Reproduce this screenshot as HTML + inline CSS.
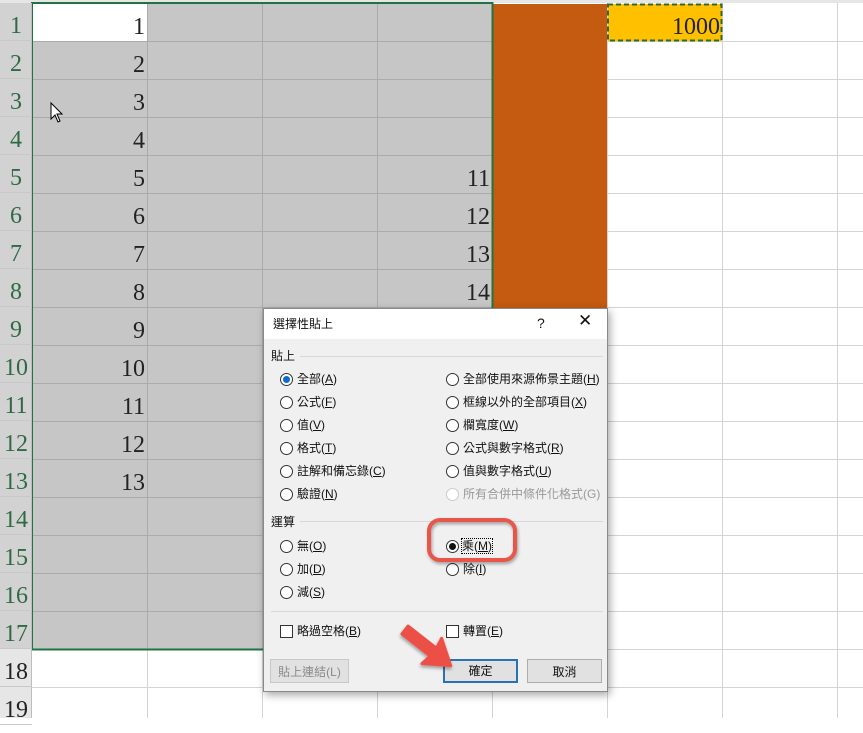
<!DOCTYPE html>
<html><head><meta charset="utf-8"><style>
body{margin:0;width:863px;height:718px;overflow:hidden;background:#fff;position:relative;font-family:"Liberation Serif",serif}
.a{position:absolute}
.rh{position:absolute;left:0;width:32px;height:38px;font-size:24px;text-align:center;line-height:46px;box-sizing:border-box;border-bottom:1px solid #c8c8c8}
.num{position:absolute;font-size:24px;text-align:right;line-height:40px;color:#222}
.d{font-family:"Liberation Sans","Noto Sans CJK TC",sans-serif;font-size:12px;color:#111}
.rad{position:absolute;width:11px;height:11px;border:1px solid #333;border-radius:50%;background:#fff}
.lb{position:absolute;white-space:nowrap;line-height:14px}
.cb{position:absolute;width:11px;height:11px;border:1px solid #333;background:#fff}
.btn{position:absolute;height:24px;background:#e1e1e1;border:1px solid #adadad;text-align:center;line-height:24px;box-sizing:border-box}
</style></head><body>
<div class="a" style="left:0;top:0;width:863px;height:3px;background:#e6e6e6"></div>
<svg class="a" style="left:0;top:0" width="863" height="718">
<g stroke="#d4d4d4" stroke-width="1">
<line x1="147.5" y1="3" x2="147.5" y2="718"/><line x1="262.5" y1="3" x2="262.5" y2="718"/><line x1="377.5" y1="3" x2="377.5" y2="718"/><line x1="492.5" y1="3" x2="492.5" y2="718"/><line x1="607.5" y1="3" x2="607.5" y2="718"/><line x1="722.5" y1="3" x2="722.5" y2="718"/><line x1="837.5" y1="3" x2="837.5" y2="718"/>
<line x1="32" y1="41.5" x2="863" y2="41.5"/><line x1="32" y1="79.5" x2="863" y2="79.5"/><line x1="32" y1="117.5" x2="863" y2="117.5"/><line x1="32" y1="155.5" x2="863" y2="155.5"/><line x1="32" y1="193.5" x2="863" y2="193.5"/><line x1="32" y1="231.5" x2="863" y2="231.5"/><line x1="32" y1="269.5" x2="863" y2="269.5"/><line x1="32" y1="307.5" x2="863" y2="307.5"/><line x1="32" y1="345.5" x2="863" y2="345.5"/><line x1="32" y1="383.5" x2="863" y2="383.5"/><line x1="32" y1="421.5" x2="863" y2="421.5"/><line x1="32" y1="459.5" x2="863" y2="459.5"/><line x1="32" y1="497.5" x2="863" y2="497.5"/><line x1="32" y1="535.5" x2="863" y2="535.5"/><line x1="32" y1="573.5" x2="863" y2="573.5"/><line x1="32" y1="611.5" x2="863" y2="611.5"/><line x1="32" y1="649.5" x2="863" y2="649.5"/><line x1="32" y1="687.5" x2="863" y2="687.5"/>
</g>
<rect x="33" y="4" width="459" height="645" fill="#c6c6c6"/>
<g stroke="#ababab" stroke-width="1">
<line x1="147.5" y1="4" x2="147.5" y2="649"/><line x1="262.5" y1="4" x2="262.5" y2="649"/><line x1="377.5" y1="4" x2="377.5" y2="649"/>
<line x1="33" y1="79.5" x2="492" y2="79.5"/><line x1="33" y1="117.5" x2="492" y2="117.5"/><line x1="33" y1="155.5" x2="492" y2="155.5"/><line x1="33" y1="193.5" x2="492" y2="193.5"/><line x1="33" y1="231.5" x2="492" y2="231.5"/><line x1="33" y1="269.5" x2="492" y2="269.5"/><line x1="33" y1="307.5" x2="492" y2="307.5"/><line x1="33" y1="345.5" x2="492" y2="345.5"/><line x1="33" y1="383.5" x2="492" y2="383.5"/><line x1="33" y1="421.5" x2="492" y2="421.5"/><line x1="33" y1="459.5" x2="492" y2="459.5"/><line x1="33" y1="497.5" x2="492" y2="497.5"/><line x1="33" y1="535.5" x2="492" y2="535.5"/><line x1="33" y1="573.5" x2="492" y2="573.5"/><line x1="33" y1="611.5" x2="492" y2="611.5"/>
<line x1="33" y1="41.5" x2="492" y2="41.5"/>
</g>
<rect x="33" y="4" width="114" height="37" fill="#fff"/>
<rect x="493" y="4" width="114" height="304" fill="#c55a11"/>
<rect x="608" y="4" width="114" height="37" fill="#ffc000"/>
<rect x="608" y="4.5" width="113.5" height="36" fill="none" stroke="#2e6b2e" stroke-width="2" stroke-dasharray="5,3"/>
<rect x="32" y="3" width="460.5" height="646.5" fill="none" stroke="#217346" stroke-width="2"/>
<path d="M51 103 L51 119 L55 115 L58 122 L60 121 L57 114 L62 114 Z" fill="#fff" stroke="#000" stroke-width="1"/>
</svg>
<div class="a" style="left:0;top:3px;width:32px;height:715px;background:#e6e6e6;border-right:1px solid #bdbdbd;box-sizing:border-box"></div>
<div class="a" style="left:0;top:3px;width:31px;height:646px;background:#d2d2d2"></div>
<div style="color:#2f6a45">
<div class="rh" style="top:3px">1</div><div class="rh" style="top:41px">2</div><div class="rh" style="top:79px">3</div><div class="rh" style="top:117px">4</div><div class="rh" style="top:155px">5</div><div class="rh" style="top:193px">6</div><div class="rh" style="top:231px">7</div><div class="rh" style="top:269px">8</div><div class="rh" style="top:307px">9</div><div class="rh" style="top:345px">10</div><div class="rh" style="top:383px">11</div><div class="rh" style="top:421px">12</div><div class="rh" style="top:459px">13</div><div class="rh" style="top:497px">14</div><div class="rh" style="top:535px">15</div><div class="rh" style="top:573px">16</div><div class="rh" style="top:611px">17</div>
</div>
<div style="color:#222"><div class="rh" style="top:649px">18</div><div class="rh" style="top:687px">19</div></div>
<div class="num" style="left:33px;width:112px;top:7px">1</div>
<div class="num" style="left:33px;width:112px;top:45px">2</div>
<div class="num" style="left:33px;width:112px;top:83px">3</div>
<div class="num" style="left:33px;width:112px;top:121px">4</div>
<div class="num" style="left:33px;width:112px;top:159px">5</div>
<div class="num" style="left:33px;width:112px;top:197px">6</div>
<div class="num" style="left:33px;width:112px;top:235px">7</div>
<div class="num" style="left:33px;width:112px;top:273px">8</div>
<div class="num" style="left:33px;width:112px;top:311px">9</div>
<div class="num" style="left:33px;width:112px;top:349px">10</div>
<div class="num" style="left:33px;width:112px;top:387px">11</div>
<div class="num" style="left:33px;width:112px;top:425px">12</div>
<div class="num" style="left:33px;width:112px;top:463px">13</div>
<div class="num" style="left:378px;width:112px;top:159px">11</div>
<div class="num" style="left:378px;width:112px;top:197px">12</div>
<div class="num" style="left:378px;width:112px;top:235px">13</div>
<div class="num" style="left:378px;width:112px;top:273px">14</div>
<div class="num" style="left:608px;width:112px;top:7px">1000</div>
<div class="a d" style="left:263px;top:308px;width:345px;height:384px;background:#f0f0f0;border:1px solid #8a8a8a;box-sizing:border-box;box-shadow:2px 3px 8px rgba(0,0,0,.35)">
<div class="a" style="left:0;top:0;width:343px;height:30px;background:#fff"></div>
<div class="lb" style="left:9px;top:8px">選擇性貼上</div>
<div class="lb" style="left:273px;top:7px;font-size:14px">?</div>
<div class="lb" style="left:314px;top:5px;font-size:17px">✕</div>
<div class="lb" style="left:7px;top:40px">貼上</div>
<div class="a" style="left:36px;top:47px;width:303px;height:1px;background:#d8d8d8"></div>
<div class="rad" style="left:16px;top:64px"><div style="margin:2px;width:7px;height:7px;border-radius:50%;background:#0a6cd0"></div></div><div class="lb" style="left:33px;top:63px">全部(<u>A</u>)</div>
<div class="rad" style="left:16px;top:87px"></div><div class="lb" style="left:33px;top:86px">公式(<u>F</u>)</div>
<div class="rad" style="left:16px;top:110px"></div><div class="lb" style="left:33px;top:109px">值(<u>V</u>)</div>
<div class="rad" style="left:16px;top:133px"></div><div class="lb" style="left:33px;top:132px">格式(<u>T</u>)</div>
<div class="rad" style="left:16px;top:156px"></div><div class="lb" style="left:33px;top:155px">註解和備忘錄(<u>C</u>)</div>
<div class="rad" style="left:16px;top:179px"></div><div class="lb" style="left:33px;top:178px">驗證(<u>N</u>)</div>
<div class="rad" style="left:182px;top:64px"></div><div class="lb" style="left:199px;top:63px">全部使用來源佈景主題(<u>H</u>)</div>
<div class="rad" style="left:182px;top:87px"></div><div class="lb" style="left:199px;top:86px">框線以外的全部項目(<u>X</u>)</div>
<div class="rad" style="left:182px;top:110px"></div><div class="lb" style="left:199px;top:109px">欄寬度(<u>W</u>)</div>
<div class="rad" style="left:182px;top:133px"></div><div class="lb" style="left:199px;top:132px">公式與數字格式(<u>R</u>)</div>
<div class="rad" style="left:182px;top:156px"></div><div class="lb" style="left:199px;top:155px">值與數字格式(<u>U</u>)</div>
<div class="rad" style="left:182px;top:179px;border-color:#ccc"></div><div class="lb" style="left:199px;top:178px;color:#999">所有合併中條件化格式(G)</div>
<div class="lb" style="left:7px;top:206px">運算</div>
<div class="a" style="left:36px;top:212px;width:303px;height:1px;background:#d8d8d8"></div>
<div class="rad" style="left:16px;top:231px"></div><div class="lb" style="left:33px;top:230px">無(<u>O</u>)</div>
<div class="rad" style="left:16px;top:254px"></div><div class="lb" style="left:33px;top:253px">加(<u>D</u>)</div>
<div class="rad" style="left:16px;top:277px"></div><div class="lb" style="left:33px;top:276px">減(<u>S</u>)</div>
<div class="rad" style="left:182px;top:231px"><div style="margin:2px;width:7px;height:7px;border-radius:50%;background:#111"></div></div><div class="lb" style="left:198px;top:230px;outline:1px dotted #000">乘(<u>M</u>)</div>
<div class="rad" style="left:182px;top:254px"></div><div class="lb" style="left:199px;top:253px">除(<u>I</u>)</div>
<div class="a" style="left:7px;top:302px;width:332px;height:1px;background:#d8d8d8"></div>
<div class="cb" style="left:16px;top:316px"></div><div class="lb" style="left:33px;top:315px">略過空格(<u>B</u>)</div>
<div class="cb" style="left:182px;top:316px"></div><div class="lb" style="left:199px;top:315px">轉置(<u>E</u>)</div>
<div class="btn" style="left:6px;top:350px;width:79px;color:#8a8a8a;border-color:#c8c8c8">貼上連結(L)</div>
<div class="btn" style="left:179px;top:350px;width:75px;border:2px solid #2a72b8;line-height:20px">確定</div>
<div class="btn" style="left:263px;top:350px;width:75px">取消</div>
</div>
<svg class="a" style="left:0;top:0" width="863" height="718">
<defs><filter id="s" x="-20%" y="-20%" width="140%" height="140%"><feDropShadow dx="1" dy="2" stdDeviation="1.5" flood-opacity=".35"/></filter></defs>
<rect x="429" y="520" width="86" height="40" rx="11" fill="none" stroke="#e8574a" stroke-width="4" filter="url(#s)"/>
<g transform="translate(405,630) rotate(38)" filter="url(#s)">
<path d="M0 -5 L36 -5 L34 -16 L58 0 L34 16 L36 5 L0 5 Z" fill="#ec5045" stroke="#ec5045" stroke-linejoin="round" stroke-width="3"/>
</g>
</svg>
</body></html>
